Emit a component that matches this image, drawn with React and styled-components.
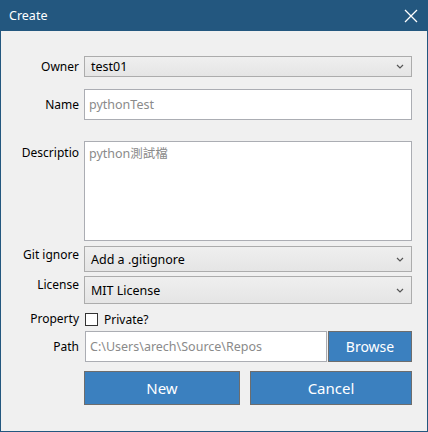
import React from 'react';
import styled, { createGlobalStyle } from 'styled-components';

const GlobalStyle = createGlobalStyle`
  html, body {
    margin: 0;
    padding: 0;
    background: #f0f0f0;
  }
  body {
    font-family: "Noto Sans", "Noto Sans CJK TC", sans-serif;
  }
`;

const Window = styled.div`
  width: 428px;
  height: 432px;
  box-sizing: border-box;
  border: 1px solid #23577f;
  border-top: none;
  background: #f0f0f0;
  display: flex;
  flex-direction: column;
`;

const TitleBar = styled.header`
  height: 31px;
  flex: none;
  background: #23577f;
  color: #ffffff;
  display: flex;
  align-items: center;
  justify-content: space-between;
  padding: 0 9px 0 8px;
  font-size: 12.5px;
`;

const CloseButton = styled.span`
  display: flex;
  width: 14px;
  height: 14px;
`;

const Form = styled.main`
  display: flex;
  flex-direction: column;
  padding: 25px 15px 0 0;
`;

const Row = styled.div`
  display: flex;
  align-items: ${p => p.$align || 'center'};
  gap: 5px;
  height: ${p => (p.$h ? `${p.$h}px` : 'auto')};
  margin-top: ${p => p.$gap || 0}px;
`;

const Label = styled.label`
  width: 78px;
  flex: none;
  text-align: right;
  font-size: 12px;
  line-height: 16px;
  color: #000;
  padding-top: ${p => p.$offset || 0}px;
`;

const Select = styled.div`
  flex: 1;
  height: ${p => p.$h}px;
  box-sizing: border-box;
  border: 1px solid #acacac;
  background: linear-gradient(#efefef, #e5e5e5);
  display: flex;
  align-items: center;
  justify-content: space-between;
  padding: 0 7px 0 6px;
  font-size: 12.5px;
  color: #000;
`;

const Input = styled.div`
  flex: 1;
  height: ${p => p.$h}px;
  box-sizing: border-box;
  border: 1px solid #abadb3;
  background: #ffffff;
  color: #8a8a8a;
  font-size: 12.5px;
  display: flex;
  align-items: ${p => (p.$multi ? 'flex-start' : 'center')};
  padding: ${p => (p.$multi ? '1px 4px' : '0 4px')};
  margin-left: ${p => p.$shift || 0}px;
`;

const Check = styled.span`
  width: 13px;
  height: 13px;
  box-sizing: border-box;
  border: 1px solid #333;
  background: #fff;
  margin-left: 1px;
`;

const CheckText = styled.span`
  font-size: 12px;
  color: #000;
  margin-left: 1px;
`;

const BlueButton = styled.button`
  font-family: inherit;
  background: #3b80bf;
  color: #ffffff;
  border: 1px solid #6d6d6d;
  font-size: ${p => p.$size || 15}px;
  height: ${p => p.$h}px;
  width: ${p => p.$w}px;
  margin-left: ${p => p.$pull || 0}px;
  flex: none;
  padding: 0;
  cursor: pointer;
`;

const Buttons = styled.div`
  display: flex;
  gap: 10px;
  margin: 9px 0 0 83px;
`;

const Chevron = () => (
  <svg width="8" height="5" viewBox="0 0 8 5">
    <path d="M1 1 L4 4 L7 1" fill="none" stroke="#555" strokeWidth="1.2" />
  </svg>
);

const XIcon = () => (
  <svg width="14" height="14" viewBox="0 0 14 14">
    <path d="M1 1 L13 13 M13 1 L1 13" stroke="#fff" strokeWidth="1.3" />
  </svg>
);

export default function App() {
  return (
    <Window>
      <GlobalStyle />
      <TitleBar>
        <span>Create</span>
        <CloseButton><XIcon /></CloseButton>
      </TitleBar>
      <Form>
        <Row $h={21}>
          <Label>Owner</Label>
          <Select $h={21}>test01<Chevron /></Select>
        </Row>
        <Row $h={31} $gap={12}>
          <Label>Name</Label>
          <Input $h={31}>pythonTest</Input>
        </Row>
        <Row $h={100} $gap={21} $align="flex-start">
          <Label $offset={4}>Descriptio</Label>
          <Input $h={100} $multi>python測試檔</Input>
        </Row>
        <Row $h={26} $gap={5} $align="flex-start">
          <Label $offset={1}>Git ignore</Label>
          <Select $h={26}>Add a .gitignore<Chevron /></Select>
        </Row>
        <Row $h={28} $gap={4} $align="flex-start">
          <Label $offset={1}>License</Label>
          <Select $h={28}>MIT License<Chevron /></Select>
        </Row>
        <Row $h={18} $gap={6}>
          <Label>Property</Label>
          <Check />
          <CheckText>Private?</CheckText>
        </Row>
        <Row $h={31} $gap={3}>
          <Label>Path</Label>
          <Input $h={31} $shift={1}>C:\Users\arech\Source\Repos</Input>
          <BlueButton $h={31} $w={84} $size={14} $pull={-4}>Browse</BlueButton>
        </Row>
        <Buttons>
          <BlueButton $h={34} $w={156}>New</BlueButton>
          <BlueButton $h={34} $w={162}>Cancel</BlueButton>
        </Buttons>
      </Form>
    </Window>
  );
}
